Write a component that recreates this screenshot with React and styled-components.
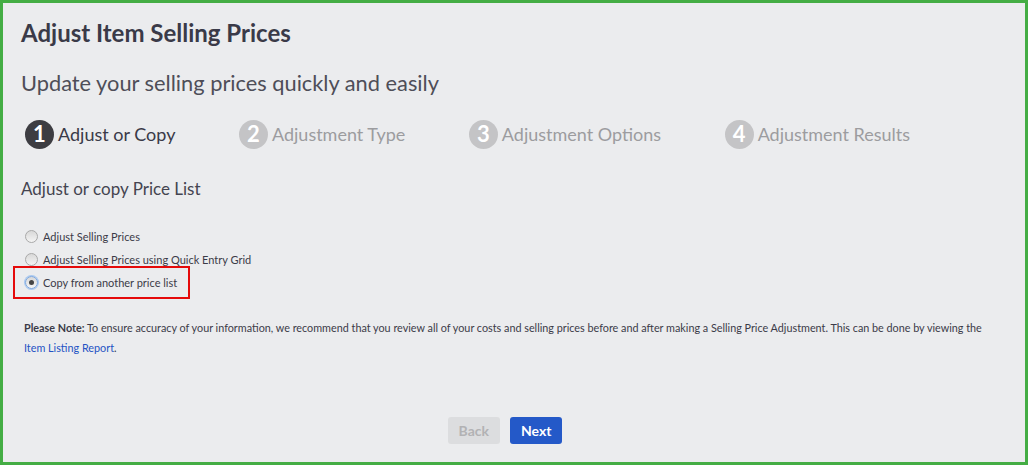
import React from 'react'
import styled, { createGlobalStyle } from 'styled-components'

const GlobalStyle = createGlobalStyle`
  html, body {
    margin: 0;
    padding: 0;
    background: #ebecee;
  }
  * { box-sizing: border-box; }
`

const Frame = styled.div`
  width: 1028px;
  height: 465px;
  border: 3px solid #44ad44;
  background: #ebecee;
  font-family: Lato, 'Open Sans', sans-serif;
  color: #3b3b48;
  padding: 15px 18px 0 18px;
  display: flex;
  flex-direction: column;
`

const Title = styled.h1`
  margin: 0;
  font-size: 24px;
  font-weight: 700;
  line-height: 30px;
  color: #3a3a48;
`

const Subtitle = styled.h2`
  margin: 20px 0 0 0;
  font-size: 21.8px;
  font-weight: 400;
  line-height: 30px;
  color: #4e4e58;
`

const Steps = styled.div`
  display: flex;
  align-items: center;
  gap: 63.5px;
  margin-top: 21px;
  padding-left: 4px;
`

const Step = styled.div`
  display: flex;
  align-items: center;
  gap: 4px;
  color: ${p => (p.active ? '#3a3a48' : '#9c9c9f')};
  font-size: 18px;
  line-height: 30px;
`

const StepNum = styled.span`
  width: 29px;
  height: 29px;
  border-radius: 50%;
  background: ${p => (p.active ? '#3d3d42' : '#c4c4c6')};
  color: #fff;
  font-weight: 700;
  font-size: 22px;
  display: flex;
  align-items: center;
  justify-content: center;
`

const Section = styled.h3`
  margin: 28px 0 0 0;
  font-size: 17px;
  font-weight: 400;
  line-height: 24px;
  color: #444450;
`

const Options = styled.div`
  display: flex;
  flex-direction: column;
  margin-top: 24px;
`

const Option = styled.label`
  display: flex;
  align-items: center;
  gap: 5px;
  height: 23px;
  font-size: 11px;
  color: #3b3b48;
  padding-left: 4px;
  ${p => p.highlight && `
    outline: 2px solid #e50a0a;
    outline-offset: 0;
    width: 173px;
    height: 29px;
    margin-left: -6px;
    padding-left: 10px;
    margin-top: -3px;
  `}
`

const Radio = styled.span`
  width: 13px;
  height: 13px;
  border-radius: 50%;
  background: linear-gradient(#d8d8d8, #f4f4f4);
  border: 1px solid #a9a9a9;
  display: flex;
  align-items: center;
  justify-content: center;
  ${p => p.checked && `
    border-color: #7ba7e0;
    box-shadow: 0 0 0 1px #a9c8f0;
    &::after {
      content: '';
      width: 5px;
      height: 5px;
      border-radius: 50%;
      background: #444;
    }
  `}
`

const Note = styled.p`
  margin: 21px 0 0 0;
  font-size: 10.8px;
  line-height: 20px;
  color: #3b3b48;
  padding: 0 24px 0 3px;
  strong { font-weight: 700; }
  a { color: #2453c4; text-decoration: none; }
`

const Buttons = styled.div`
  display: flex;
  justify-content: center;
  gap: 10px;
  margin-top: auto;
  margin-bottom: 18px;
  padding-right: 18px;
`

const Button = styled.button`
  height: 27px;
  padding: 0 11px;
  border: none;
  border-radius: 3px;
  font-family: Lato, sans-serif;
  font-size: 14px;
  font-weight: 700;
  background: ${p => (p.primary ? '#2459c8' : '#dcdddf')};
  color: ${p => (p.primary ? '#fff' : '#b2b2b4')};
`

const steps = ['Adjust or Copy', 'Adjustment Type', 'Adjustment Options', 'Adjustment Results']

export default function App() {
  return (
    <>
      <GlobalStyle />
      <Frame>
        <Title>Adjust Item Selling Prices</Title>
        <Subtitle>Update your selling prices quickly and easily</Subtitle>
        <Steps>
          {steps.map((s, i) => (
            <Step key={s} active={i === 0}>
              <StepNum active={i === 0}>{i + 1}</StepNum>
              {s}
            </Step>
          ))}
        </Steps>
        <Section>Adjust or copy Price List</Section>
        <Options>
          <Option><Radio />Adjust Selling Prices</Option>
          <Option><Radio />Adjust Selling Prices using Quick Entry Grid</Option>
          <Option highlight><Radio checked />Copy from another price list</Option>
        </Options>
        <Note>
          <strong>Please Note:</strong> To ensure accuracy of your information, we recommend that you review all of your costs and selling prices before and after making a Selling Price Adjustment. This can be done by viewing the{' '}
          <a href="#">Item Listing Report</a>.
        </Note>
        <Buttons>
          <Button>Back</Button>
          <Button primary>Next</Button>
        </Buttons>
      </Frame>
    </>
  )
}
